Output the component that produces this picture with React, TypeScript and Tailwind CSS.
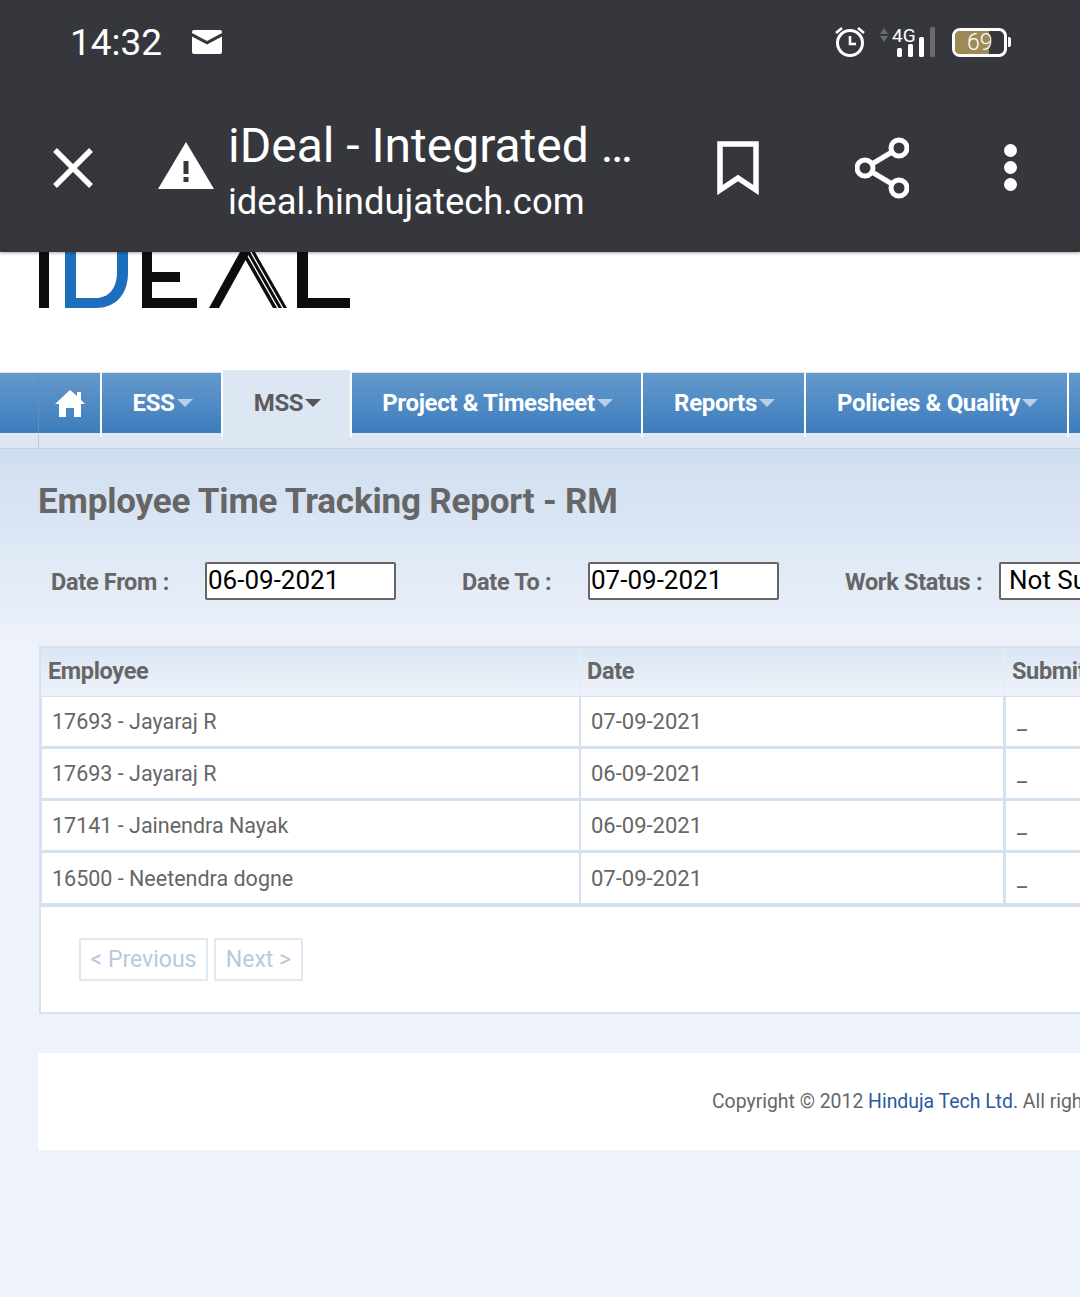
import type { ReactNode } from 'react';

const rows = [
  { employee: '17693 - Jayaraj R', date: '07-09-2021', height: 'h-[52px]' },
  { employee: '17693 - Jayaraj R', date: '06-09-2021', height: 'h-[52px]' },
  { employee: '17141 - Jainendra Nayak', date: '06-09-2021', height: 'h-[52px]' },
  { employee: '16500 - Neetendra dogne', date: '07-09-2021', height: 'h-[53px]' },
];

const navItems = [
  { label: 'ESS', width: 'w-[121px]', active: false },
  { label: 'MSS', width: 'w-[129px]', active: true },
  { label: 'Project & Timesheet', width: 'w-[291px]', active: false },
  { label: 'Reports', width: 'w-[163px]', active: false },
  { label: 'Policies & Quality', width: 'w-[263px]', active: false },
];

function StatusIcons() {
  return (
    <div className="ml-auto mr-[69px] flex items-center">
      <svg width="34" height="34" viewBox="0 0 34 34" fill="none" stroke="white" strokeWidth="3" className="mr-[11px]">
        <circle cx="17" cy="18" r="12.5" />
        <path d="M17 11v8h6" strokeWidth="2.6" />
        <path d="M3 8l6-5M31 8l-6-5" strokeWidth="2.6" />
      </svg>
      <svg width="58" height="34" viewBox="0 0 58 34" className="mr-[16px]">
        <path d="M6 3l4 6H2zM6 17l4-6H2z" fill="#6b6c70" />
        <text x="14" y="17" fill="white" fontSize="19" fontFamily="Roboto, sans-serif">4G</text>
        <rect x="19" y="23" width="5" height="9" rx="1.5" fill="white" />
        <rect x="30" y="19" width="5" height="13" rx="1.5" fill="white" />
        <rect x="41" y="12" width="5" height="20" rx="1.5" fill="white" />
        <rect x="52" y="2" width="5" height="30" rx="1.5" fill="#6b6c70" />
      </svg>
      <div className="flex items-center">
        <div className="relative h-[29px] w-[55px] overflow-hidden rounded-[8px] border-[3px] border-white">
          <div className="h-full w-[34px] bg-[#9c8b57]" />
          <span className="absolute inset-0 pl-[12px] font-['Roboto',sans-serif] text-[23px] leading-[23px] font-light text-white">69</span>
        </div>
        <div className="ml-[1px] h-[10px] w-[3px] rounded-r-[2px] bg-white" />
      </div>
    </div>
  );
}

function Header() {
  return (
    <header className="relative z-10 h-[252px] bg-[#36373c] font-['Roboto',sans-serif] text-white shadow-[0_1px_3px_rgba(0,0,0,0.35)]">
      <div className="flex h-[84px] items-center pl-[70px]">
        <span className="text-[37px] leading-none">14:32</span>
        <svg width="30" height="24" viewBox="0 0 30 24" className="ml-[30px]">
          <path d="M2 0h26a2 2 0 0 1 2 2v1L15 11 0 3V2a2 2 0 0 1 2-2z" fill="white" />
          <path d="M0 6.5l15 8 15-8V22a2 2 0 0 1-2 2H2a2 2 0 0 1-2-2z" fill="white" />
        </svg>
        <StatusIcons />
      </div>
      <div className="flex h-[168px] pl-[52px]">
        <svg width="42" height="42" viewBox="0 0 42 42" fill="none" stroke="white" strokeWidth="5.5" className="mt-[63px]">
          <path d="M3 3l36 36M39 3L3 39" />
        </svg>
        <svg width="56" height="47" viewBox="0 0 56 47" className="mt-[58px] ml-[64px]">
          <path d="M28 0l28 47H0z" fill="white" />
          <rect x="25.5" y="19" width="5" height="13" fill="#36373c" />
          <rect x="25.5" y="35" width="5" height="5" fill="#36373c" />
        </svg>
        <div className="ml-[14px] flex w-[440px] flex-col">
          <span className="mt-[32px] text-[48px] leading-[60px] whitespace-nowrap">iDeal - Integrated …</span>
          <span className="mt-[-1px] text-[36.4px] leading-[54px] whitespace-nowrap">ideal.hindujatech.com</span>
        </div>
        <svg width="42" height="54" viewBox="0 0 42 54" fill="none" stroke="white" strokeWidth="5.5" className="mt-[57px] ml-[49px]">
          <path d="M3 3h36v46L21 37 3 49z" />
        </svg>
        <svg width="54" height="62" viewBox="0 0 54 62" fill="none" stroke="white" strokeWidth="5" className="mt-[53px] ml-[96px]">
          <circle cx="44" cy="11" r="8" />
          <circle cx="10" cy="31" r="8" />
          <circle cx="44" cy="51" r="8" />
          <path d="M17 27l20-12M17 35l20 12" />
        </svg>
        <div className="mt-[60px] ml-[95px] flex flex-col gap-[4px]">
          <span className="size-[13px] rounded-full bg-white" />
          <span className="size-[13px] rounded-full bg-white" />
          <span className="size-[13px] rounded-full bg-white" />
        </div>
      </div>
    </header>
  );
}

function Logo() {
  return (
    <div className="h-[120px] bg-white pl-[38px]">
      <svg width="314" height="57" viewBox="0 0 314 57" className="blur-[0.6px]">
        <g fill="#0d0d0f">
          <rect x="1" y="0" width="10" height="56" />
          <path d="M104 0h10v20h28v10h-28v16h45v10h-55z" />
          <path d="M171 56L202 0h10l-31 56z" />
          <path d="M203 0h4l32 56h-4zM208.5 0h3.5l32 56h-3.5zM213.5 0h3.5l32 56h-3.5z" />
          <path d="M259 0h11v46h42v10h-53z" />
        </g>
        <path d="M27 0h11v46h20c12 0 21-9 21-26V0h11v21c0 23-14 35-32 35H27z" fill="#1d6fbe" />
      </svg>
    </div>
  );
}

function Caret({ active }: { active: boolean }) {
  return (
    <span
      className={
        active
          ? 'ml-[2px] size-0 border-x-[8px] border-t-[8px] border-x-transparent border-t-[#555]'
          : 'ml-[2px] size-0 border-x-[8px] border-t-[8px] border-x-transparent border-t-[#b9cfe6]'
      }
    />
  );
}

function Nav() {
  return (
    <nav className="font-['Roboto',sans-serif]">
      <div className="flex h-[62px] items-stretch border-t-[1px] border-b-[1px] border-[#dfe9f4] bg-gradient-to-b from-[#6499cc] to-[#3c7dbd] pl-[38px]">
        <div className="flex w-[62px] items-center justify-center border-l-[1px] border-[#5c90c4]">
          <svg width="30" height="28" viewBox="0 0 30 28" fill="white">
            <path d="M15 1l7 6V3h4v8l4 4h-4v13h-7v-9h-8v9H4V15H0z" />
          </svg>
        </div>
        {navItems.map((item) => (
          <div
            key={item.label}
            className={`${item.width} ${
              item.active
                ? 'relative mt-[-3px] mb-[-4px] bg-[#dde7f4] pb-[1px] text-[#5c5c5c]'
                : 'relative mb-[-4px] pb-[5px] text-white'
            } flex items-center justify-center border-l-[2px] border-white pl-[2px] text-[24px] font-bold tracking-[-0.35px] whitespace-nowrap`}
          >
            {item.label}
            <Caret active={item.active} />
          </div>
        ))}
        <div className="relative mb-[-4px] flex-1 border-l-[2px] border-white" />
      </div>
      <div className="h-[15px] border-b-[1px] border-[#c3d4e8] bg-[#dde7f4]">
        <div className="ml-[38px] h-full border-l-[1px] border-[#bccde2]" />
      </div>
    </nav>
  );
}

function Input({ value, width }: { value: string; width: string }): ReactNode {
  return (
    <div className={`${width} h-[38px] shrink-0 overflow-hidden rounded-[2px] border-[2px] border-[#666] bg-white pl-[1px] text-[26px] leading-[33px] font-normal tracking-normal whitespace-nowrap text-black`}>
      {value}
    </div>
  );
}

function Filters() {
  return (
    <div className="mt-[39px] flex h-[38px] items-start pl-[51px] text-[23.5px] leading-[28px] font-bold tracking-[-0.3px] whitespace-nowrap text-[#666]">
      <span className="w-[154px] shrink-0 pt-[6px]">Date From :</span>
      <Input value="06-09-2021" width="w-[191px]" />
      <span className="ml-[66px] w-[126px] shrink-0 pt-[6px]">Date To :</span>
      <Input value="07-09-2021" width="w-[191px]" />
      <span className="ml-[66px] w-[154px] shrink-0 pt-[6px]">Work Status :</span>
      <div className="h-[38px] w-[200px] shrink-0 rounded-[2px] border-[2px] border-[#666] bg-white pl-[8px] text-[26px] leading-[33px] font-normal tracking-normal text-black">
        Not Submitted
      </div>
    </div>
  );
}

function ReportTable() {
  return (
    <div className="mt-[46px] ml-[39px] w-[1200px] border-[2px] border-[#d3e1f1] text-[#666]">
      <div className="flex h-[48px] bg-gradient-to-b from-[#dbe6f4] to-[#eef3fa] text-[23.5px] leading-[46px] font-bold tracking-[-0.35px]">
        <div className="w-[540px] border-r-[2px] border-[#e4ecf6] pl-[7px]">Employee</div>
        <div className="w-[424px] border-r-[2px] border-[#e4ecf6] pl-[6px]">Date</div>
        <div className="pl-[7px]">Submitted</div>
      </div>
      {rows.map((row) => (
        <div key={row.employee + row.date} className={`${row.height} flex bg-[#d3e1f1] pt-[1px] pb-[2px] pl-[1px]`}>
          <div className="flex w-[537px] items-center bg-white pt-[2px] pl-[10px] text-[21.5px] whitespace-nowrap">{row.employee}</div>
          <div className="ml-[2px] flex w-[422px] items-center bg-white pl-[10px] text-[22px]">{row.date}</div>
          <div className="ml-[3px] flex flex-1 items-center bg-white pl-[11px] text-[22px]">_</div>
        </div>
      ))}
      <div className="h-[107px] border-t-[2px] border-[#d3e1f1] bg-white pt-[31px] pl-[38px]">
        <div className="flex gap-[6px] text-[23px] leading-[40px] text-[#b6cbe0]">
          <span className="h-[43px] w-[129px] border-[2px] border-[#dfe9f4] text-center">&lt; Previous</span>
          <span className="h-[43px] w-[89px] border-[2px] border-[#dfe9f4] text-center">Next &gt;</span>
        </div>
      </div>
    </div>
  );
}

export default function App() {
  return (
    <div className="h-[1297px] w-[1080px] overflow-hidden bg-[#eef2fb] font-['Roboto',sans-serif]">
      <Header />
      <Logo />
      <Nav />
      <section className="bg-gradient-to-b from-[#cfdeef] from-0% to-[#eef2fb] to-[200px] pt-[32px]">
        <h1 className="pl-[38px] text-[35px] leading-[42px] font-bold tracking-[-0.18px] text-[#666]">
          Employee Time Tracking Report - RM
        </h1>
        <Filters />
        <ReportTable />
        <footer className="mt-[39px] ml-[38px] flex h-[97px] w-[1200px] items-center bg-white pl-[674px] text-[19.4px] whitespace-nowrap text-[#666]">
          Copyright © 2012&nbsp;<span className="text-[#2a5a9c]">Hinduja Tech Ltd</span>. All rights reserved.
        </footer>
      </section>
    </div>
  );
}
